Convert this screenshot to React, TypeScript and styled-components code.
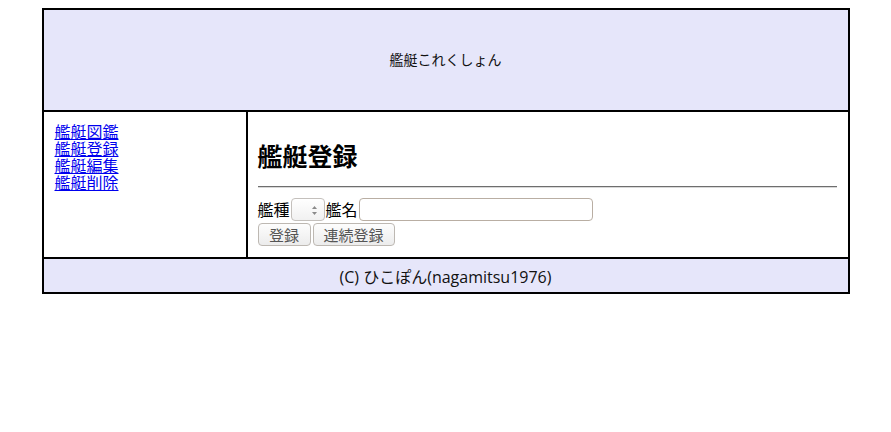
import * as React from "react"
import styled, { createGlobalStyle } from "styled-components"

const GlobalStyle = createGlobalStyle`
  body {
    margin: 8px;
    background: #fff;
    font-family: "Open Sans", "Noto Sans CJK JP", sans-serif;
    color: #000;
  }
`

const Frame = styled.div`
  width: 808px;
  margin: 0 auto;
  border: 2px solid #000;
  box-sizing: border-box;
  display: flex;
  flex-direction: column;
`

const Header = styled.header`
  height: 102px;
  box-sizing: border-box;
  padding-bottom: 3px;
  background: #e6e6fa;
  border-bottom: 2px solid #000;
  display: flex;
  align-items: center;
  justify-content: center;
  font-size: 14px;
  color: #111;
`

const Body = styled.div`
  display: flex;
  height: 145px;
  border-bottom: 2px solid #000;
`

const Nav = styled.nav`
  width: 204px;
  padding: 11px;
  box-sizing: border-box;
  border-right: 2px solid #000;
  display: flex;
  flex-direction: column;
  align-items: flex-start;
`

const NavLink = styled.a`
  font-family: "Noto Sans CJK JP", sans-serif;
  font-size: 16px;
  line-height: 17px;
  color: #0000ee;
  text-decoration: underline;
`

const Main = styled.main`
  flex: 1;
  padding: 10px 11px 10px 10px;
  display: flex;
  flex-direction: column;
`

const Title = styled.h2`
  margin: 19px 0 16px;
  font-family: "Noto Sans CJK JP", sans-serif;
  font-size: 25px;
  line-height: 29px;
  font-weight: bold;
`

const Rule = styled.hr`
  margin: 0 0 10px;
  border: 0;
  border-top: 1px solid #6e6e6e;
  border-bottom: 1px solid #d8d8d8;
  height: 0;
`

const FormRow = styled.div`
  display: flex;
  align-items: center;
  height: 23px;
  font-family: "Noto Sans CJK JP", sans-serif;
  font-size: 16px;
  margin-bottom: 2px;
`

const Label = styled.span`
  line-height: 23px;
`

const SelectBox = styled.span`
  position: relative;
  width: 34px;
  height: 23px;
  box-sizing: border-box;
  border: 1px solid #c4c0bc;
  border-radius: 4px;
  background: linear-gradient(#fff, #f1f1f1);
  margin: 0 1px;
`

const Arrows = styled.svg`
  position: absolute;
  right: 6px;
  top: 6px;
`

const TextInput = styled.input`
  width: 234px;
  height: 23px;
  box-sizing: border-box;
  border: 1px solid #b9aea3;
  border-radius: 4px;
  margin: 0 0 0 1px;
  padding: 0 4px;
  font-size: 14px;
  background: #fff;
`

const ButtonRow = styled.div`
  display: flex;
  gap: 2px;
`

const Button = styled.button<{ $w: number }>`
  width: ${(p) => p.$w}px;
  height: 23px;
  box-sizing: border-box;
  border: 1px solid #bdb8b2;
  border-radius: 4px;
  background: linear-gradient(#fdfdfd, #ececec);
  font-family: "Noto Sans CJK JP", sans-serif;
  font-size: 15px;
  line-height: 20px;
  color: #555;
  padding: 0;
`

const Footer = styled.footer`
  height: 33px;
  background: #e6e6fa;
  display: flex;
  align-items: center;
  justify-content: center;
  font-size: 16px;
  color: #111;
`

const App = () => (
  <>
    <GlobalStyle />
    <Frame>
      <Header>艦艇これくしょん</Header>
      <Body>
        <Nav>
          <NavLink href="#">艦艇図鑑</NavLink>
          <NavLink href="#">艦艇登録</NavLink>
          <NavLink href="#">艦艇編集</NavLink>
          <NavLink href="#">艦艇削除</NavLink>
        </Nav>
        <Main>
          <Title>艦艇登録</Title>
          <Rule />
          <FormRow>
            <Label>艦種</Label>
            <SelectBox>
              <Arrows width="7" height="11" viewBox="0 0 7 11">
                <path d="M3.5 1 L6 4 L1 4 Z" fill="#8a8a8a" />
                <path d="M3.5 10 L6 7 L1 7 Z" fill="#8a8a8a" />
              </Arrows>
            </SelectBox>
            <Label>艦名</Label>
            <TextInput type="text" />
          </FormRow>
          <ButtonRow>
            <Button $w={53}>登録</Button>
            <Button $w={82}>連続登録</Button>
          </ButtonRow>
        </Main>
      </Body>
      <Footer>(C) ひこぽん(nagamitsu1976)</Footer>
    </Frame>
  </>
)

export default App
